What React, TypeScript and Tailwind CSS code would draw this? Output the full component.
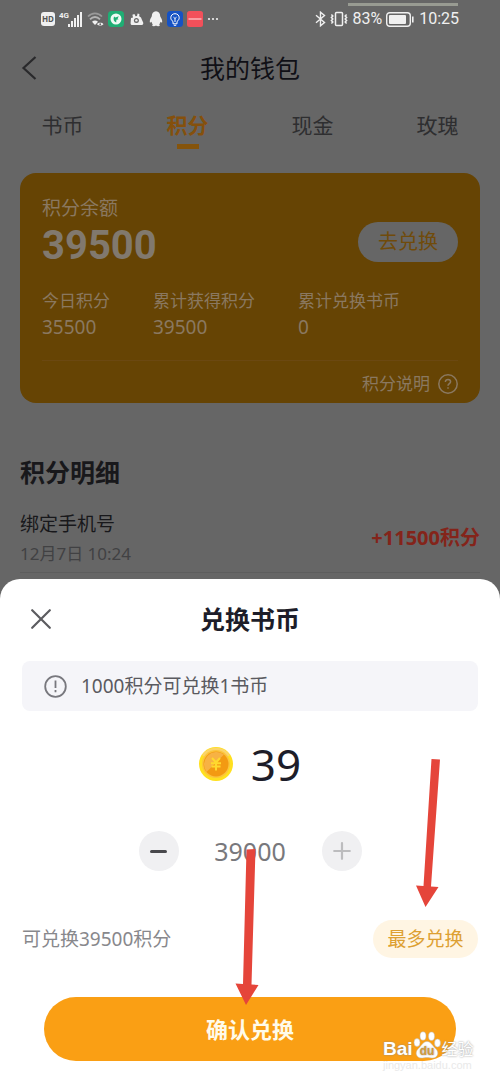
import React, { useState } from 'react';

const POINTS_PER_COIN = 1000;
const BALANCE = 39500;

const tabs = ['书币', '积分', '现金', '玫瑰'];

const stats = [
  { label: '今日积分', value: '35500' },
  { label: '累计获得积分', value: '39500' },
  { label: '累计兑换书币', value: '0' },
];

function StatusBar() {
  return (
    <div className="relative flex h-[38px] items-center justify-between pr-[41px] pl-[41px] text-[#f0f0f0]">
      <div className="absolute top-[3px] right-[42px] h-[3px] w-[110px] bg-[#989b92]" />
      <div className="flex items-center gap-1">
        <span className="flex h-[14px] w-[14px] items-center justify-center rounded-[3px] bg-[#f0f0f0] text-[8px] leading-none font-bold text-[#555]">
          HD
        </span>
        <svg width="24" height="18" viewBox="0 0 24 18" fill="currentColor">
          <text x="0" y="8" fontSize="8" fontWeight="700" fontFamily="Roboto, sans-serif">4G</text>
          <rect x="9" y="14" width="2" height="3" />
          <rect x="12" y="11" width="2" height="6" />
          <rect x="15" y="8" width="2" height="9" />
          <rect x="18" y="5" width="2" height="12" />
          <rect x="21" y="2" width="2" height="15" />
        </svg>
        <svg width="17" height="16" viewBox="0 0 17 16" fill="none" strokeWidth="1.8">
          <path d="M1 5.5C5 1.2 11 1.2 15 5.5" stroke="#9a9a9a" />
          <path d="M3 8.3C6 5.2 10 5.2 13 8.3" stroke="#b4b4b4" />
          <path d="M5 10.8C7 9 9 9 11 10.8L8 14Z" fill="#f0f0f0" />
          <path d="M10 13.2C11.5 11.4 15 11.4 16.5 13.2C15 15 11.5 15 10 13.2Z" fill="#f0f0f0" />
          <circle cx="13.2" cy="13.2" r="0.9" fill="#666" />
        </svg>
        <svg width="16" height="16" viewBox="0 0 16 16">
          <rect width="16" height="16" rx="3.5" fill="#1fae74" />
          <circle cx="8" cy="8" r="5.5" fill="#eefaf4" />
          <path d="M6 5.4L7.5 6.6L10.8 5.2L9.6 7.4L10.6 8.2L8.4 8.8L8.2 11.4C5.8 10.6 5 8 6 5.4Z" fill="#1fae74" />
        </svg>
        <svg width="16" height="16" viewBox="0 0 16 16" className="ml-px">
          <path d="M2 7L4 6.4L3.4 3.8L5.4 3L6.6 5.2L8 5L8.6 2.6L10.4 3L10.2 5.2L12 6.6L13 9L14.2 11.5C14.6 13.4 13.6 14 12 14H3.4C2 14 1.6 13.4 1.6 12Z" fill="#f0f0f0" />
          <circle cx="7.4" cy="9.4" r="2.5" fill="#666" />
          <circle cx="7.4" cy="9.4" r="1.2" fill="#f0f0f0" />
        </svg>
        <svg width="14" height="16" viewBox="0 0 14 16" fill="currentColor">
          <path d="M7 0.3C9.8 0.3 11.2 2.5 11.2 5.2C12.2 7 13.5 9 13.2 11.2C12.8 12 12 11.4 11.5 10.7C11.3 11.8 10.8 12.7 10.2 13.4C11.2 14 10.9 15.2 9.3 15.2C8.2 15.2 7.4 14.9 7 14.6C6.6 14.9 5.8 15.2 4.7 15.2C3.1 15.2 2.8 14 3.8 13.4C3.2 12.7 2.7 11.8 2.5 10.7C2 11.4 1.2 12 0.8 11.2C0.5 9 1.8 7 2.8 5.2C2.8 2.5 4.2 0.3 7 0.3Z" />
        </svg>
        <svg width="16" height="16" viewBox="0 0 16 16" fill="none" stroke="#fff">
          <rect width="16" height="16" rx="3.5" fill="#1552c4" stroke="none" />
          <path d="M6 10.5C4.6 9.5 3.8 8.3 3.8 6.7C3.8 4.4 5.6 2.7 8 2.7C10.4 2.7 12.2 4.4 12.2 6.7C12.2 8.3 11.4 9.5 10 10.5V12.8H6Z" />
          <path d="M8 11V7.5M6.5 6.2L8 7.5L9.5 6.2M6.8 14.3H9.2" />
        </svg>
        <svg width="16" height="16" viewBox="0 0 16 16">
          <rect width="16" height="16" rx="2.5" fill="#f2505a" />
          <rect x="1.5" y="7" width="13" height="2" fill="#f99ca1" />
        </svg>
        <svg width="12" height="16" viewBox="0 0 12 16" fill="currentColor">
          <circle cx="2" cy="8" r="1.1" />
          <circle cx="6" cy="8" r="1.1" />
          <circle cx="10" cy="8" r="1.1" />
        </svg>
      </div>

      <div className="flex items-center gap-1 font-[Roboto,sans-serif] text-[16px] leading-5">
        <svg width="11" height="16" viewBox="0 0 11 16" fill="none" stroke="currentColor" strokeWidth="1.4">
          <path d="M1 4.3L9.5 11.5L5.5 14.8V1.2L9.5 4.5L1 11.7" />
        </svg>
        <svg width="18" height="16" viewBox="0 0 18 16" fill="none" stroke="currentColor" strokeWidth="1.5">
          <rect x="5.5" y="1.5" width="7" height="13" rx="1" />
          <path d="M1.4 3.5L2.8 5L1.4 6.5L2.8 8L1.4 9.5L2.8 11L1.4 12.5M16.6 3.5L15.2 5L16.6 6.5L15.2 8L16.6 9.5L15.2 11L16.6 12.5" />
        </svg>
        <span>83%</span>
        <svg width="28" height="15" viewBox="0 0 28 15" fill="none" stroke="currentColor">
          <rect x="0.7" y="0.7" width="23.6" height="13.6" rx="3" strokeWidth="1.4" />
          <rect x="3" y="3" width="17" height="9" rx="1" fill="currentColor" stroke="none" />
          <path d="M26.8 4.5V10.5" strokeWidth="1.6" />
        </svg>
        <span className="ml-px">10:25</span>
      </div>
    </div>
  );
}

function WalletPage() {
  return (
    <div className="text-[#18181b]">
      <header className="grid h-15 grid-cols-[1fr_auto_1fr] items-center">
        <button aria-label="返回" className="ml-[21px] w-4 text-[#29292b]">
          <svg width="16" height="24" viewBox="0 0 16 24" fill="none" stroke="currentColor" strokeWidth="2.2">
            <path d="M14.5 1L2.5 12L14.5 23" />
          </svg>
        </button>
        <h1 className="text-[25px] leading-9 text-[#101016]">我的钱包</h1>
      </header>

      <nav className="grid grid-cols-4 pt-3">
        {tabs.map(tab => (
          <a
            key={tab}
            href="#"
            className={`flex flex-col items-center gap-1 text-[21px] leading-[30px] ${
              tab === '积分' ? 'font-bold text-[#85500c]' : 'text-[#2e2e30]'
            }`}
          >
            {tab}
            {tab === '积分' && <span className="h-[5px] w-[22px] bg-[#85540c]" />}
          </a>
        ))}
      </nav>

      {/* Balance card */}
      <section className="mx-5 mt-6 rounded-2xl bg-[#664404] px-[22px] pt-[21px] pb-[7px] text-[#8a7860]">
        <div className="flex items-end justify-between">
          <div>
            <p className="text-[19px] leading-7">积分余额</p>
            <p className="font-[Roboto,sans-serif] text-[40px] leading-12 font-bold text-[#81796e]">39500</p>
          </div>
          <button className="mb-2 h-10 w-[100px] rounded-full bg-[#666] text-[20px] leading-7 text-[#704b0b]">
            去兑换
          </button>
        </div>
        <div className="mt-[19px] flex gap-[43px]">
          {stats.map(stat => (
            <div key={stat.label}>
              <p className="text-[17px] leading-6">{stat.label}</p>
              <p className="text-[19px] leading-7">{stat.value}</p>
            </div>
          ))}
        </div>
        <hr className="mt-[19px] border-[#6b4811]" />
        <a href="#" className="mt-[11px] flex items-center justify-end gap-2 text-[17px] leading-6">
          积分说明
          <svg width="20" height="20" viewBox="0 0 20 20" fill="none" stroke="currentColor" strokeWidth="1.5">
            <circle cx="10" cy="10" r="9.2" />
            <path d="M7.4 8C7.4 6.4 8.5 5.5 10 5.5C11.5 5.5 12.6 6.4 12.6 7.8C12.6 9.5 10 9.8 10 11.8" />
            <path d="M10 13.2V14.8" />
          </svg>
        </a>
      </section>

      <section className="mx-5 mt-[51px] pb-1.5">
        <h2 className="text-[25px] leading-9 font-bold">积分明细</h2>
        <div className="mt-[18px] flex items-center justify-between border-b border-[#5d5d5d] pb-1">
          <div>
            <p className="text-[19px] leading-8">绑定手机号</p>
            <p className="text-[17px] leading-7 text-[#414143]">12月7日 10:24</p>
          </div>
          <p className="text-[20px] leading-7 font-bold text-[#84241a]">+11500积分</p>
        </div>
      </section>
    </div>
  );
}

function Watermark() {
  return (
    <div className="pointer-events-none absolute right-7 bottom-3 w-[89px] text-white">
      <div className="flex items-end whitespace-nowrap [text-shadow:0_0_2px_#888]">
        <span className="font-['Liberation_Sans',sans-serif] text-[19px] leading-5 font-bold">Bai</span>
        <svg width="28" height="28" viewBox="0 0 28 28" fill="#fff" stroke="#b9b9b9" strokeWidth="0.5" className="shrink-0">
          <ellipse cx="4" cy="11.5" rx="3" ry="4" />
          <ellipse cx="10" cy="5" rx="3" ry="4.2" />
          <ellipse cx="18.5" cy="5.2" rx="3" ry="4.2" />
          <ellipse cx="24.5" cy="12" rx="3" ry="4" />
          <path d="M14 10.5C18 10.5 19.5 15 23 18C26.5 21.5 24.5 27 20 27C17.5 27 16 26.5 14 26.5C12 26.5 10.5 27 8 27C3.5 27 1.5 21.5 5 18C8.5 15 10 10.5 14 10.5Z" />
          <text x="14" y="24" fontSize="12" fontWeight="700" textAnchor="middle" fill="#d59a3c" stroke="none" fontFamily="Liberation Sans, sans-serif">du</text>
        </svg>
        <span className="ml-px text-[16px] leading-5">经验</span>
      </div>
      <p className="font-['Liberation_Sans',sans-serif] text-[11px] leading-3 text-[#e9e9e9]">jingyan.baidu.com</p>
    </div>
  );
}

function ExchangeSheet() {
  const max = Math.floor(BALANCE / POINTS_PER_COIN);
  const [coins, setCoins] = useState(max);

  return (
    <section className="relative flex-1 rounded-t-[20px] bg-white px-[22px] pb-[22px]">
      <header className="grid h-20 grid-cols-[1fr_auto_1fr] items-center">
        <button aria-label="关闭" className="ml-[9px] w-5 text-[#5c5c60]">
          <svg width="20" height="20" viewBox="0 0 20 20" fill="none" stroke="currentColor" strokeWidth="2.2" strokeLinecap="round">
            <path d="M1.2 1.2L18.8 18.8M18.8 1.2L1.2 18.8" />
          </svg>
        </button>
        <h2 className="text-[25px] leading-9 font-bold text-[#1d1d29]">兑换书币</h2>
      </header>

      <div className="mt-0.5 flex h-[50px] items-center gap-[14px] rounded-lg bg-[#f5f5f9] pl-[22px] text-[#5a5a60]">
        <svg width="23" height="23" viewBox="0 0 23 23" fill="none" stroke="#78787e" strokeWidth="1.8">
          <circle cx="11.5" cy="11.5" r="10.3" />
          <path d="M11.5 5.5V13M11.5 15V17.2" />
        </svg>
        <p className="text-[19px] leading-7">1000积分可兑换1书币</p>
      </div>

      <div className="mt-[25px] flex items-center justify-center gap-[18px]">
        <svg width="34" height="34" viewBox="0 0 34 34">
          <circle cx="17" cy="17" r="17" fill="#ffe01f" />
          <path d="M3 8A17 17 0 0 1 31 8L17 18Z" fill="#fbd46a" />
          <circle cx="17" cy="17" r="14" fill="#fbc43c" />
          <circle cx="17" cy="17" r="12.5" fill="#f39a12" />
          <path d="M7.5 25A12.5 12.5 0 0 1 25 7.5Z" fill="#f7b244" />
          <path d="M13 11L17 15.5L21 11M12 16.2H22M12.5 19.5H21.5M17 15.5V23.5" fill="none" stroke="#ffd92e" strokeWidth="2" />
        </svg>
        <p className="text-[44px] leading-14 text-[#1d1d29]">{coins}</p>
      </div>

      <div className="mt-[39px] flex items-center justify-center gap-5">
        <button
          aria-label="减少"
          onClick={() => setCoins(Math.max(0, coins - 1))}
          className="flex h-10 w-10 items-center justify-center rounded-full bg-[#f0f0f2]"
        >
          <span className="h-[3px] w-[17px] rounded-full bg-[#48484c]" />
        </button>
        <input
          aria-label="兑换积分"
          value={coins * POINTS_PER_COIN}
          readOnly
          className="h-10 w-[103px] text-center text-[25px] leading-10 text-[#78787c] outline-none"
        />
        <button
          aria-label="增加"
          onClick={() => setCoins(Math.min(max, coins + 1))}
          className="flex h-10 w-10 items-center justify-center rounded-full bg-[#f0f0f2] text-[#bcbcbe]"
        >
          <svg width="18" height="18" viewBox="0 0 18 18" stroke="currentColor" strokeWidth="2.2" strokeLinecap="round">
            <path d="M1.2 9H16.8M9 1.2V16.8" />
          </svg>
        </button>
      </div>

      <div className="mt-[49px] flex items-center justify-between">
        <p className="text-[19px] leading-7 text-[#88888c]">可兑换39500积分</p>
        <div className="relative">
          <button
            onClick={() => setCoins(max)}
            className="h-[38px] w-[105px] rounded-full bg-[#fff5e3] text-[19px] leading-7 text-[#dda032]"
          >
            最多兑换
          </button>
          <svg width="26" height="148" viewBox="0 0 26 148" fill="#e5453a" className="pointer-events-none absolute right-[37px] bottom-[51px]">
            <path d="M16.5 0L25 0.5L16 127.5L23.5 128L10.5 148L1 126.5L8.5 127Z" />
          </svg>
        </div>
      </div>

      <div className="relative mx-[22px] mt-[39px]">
        <button className="h-16 w-full rounded-full bg-[#fa9f14] text-[22px] leading-8 font-bold text-[#fffbea]">
          确认兑换
        </button>
        <svg width="24" height="156" viewBox="0 0 24 156" fill="#e5453a" className="pointer-events-none absolute right-1/2 bottom-14 -mr-[9px]">
          <path d="M11.5 0.5L20.5 0L16.5 135.5L23.5 136L11 156L0.5 134.5L8 135Z" />
        </svg>
      </div>

      <Watermark />
    </section>
  );
}

export default function App() {
  return (
    <div className="flex min-h-screen flex-col bg-[#666] font-['Noto_Sans','Noto_Sans_CJK_SC',sans-serif]">
      <StatusBar />
      <WalletPage />
      <ExchangeSheet />
    </div>
  );
}
